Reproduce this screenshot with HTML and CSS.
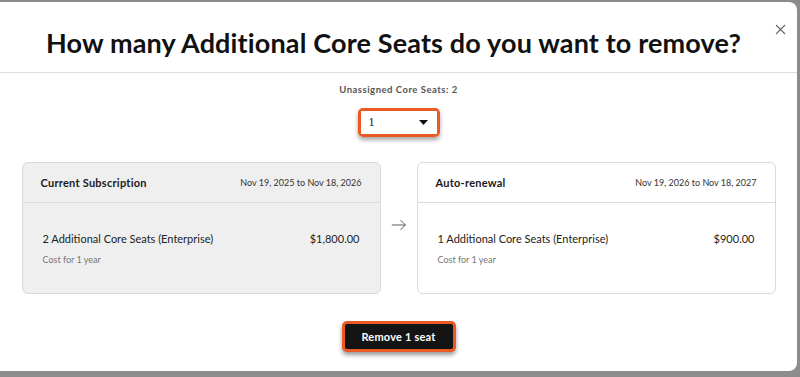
FILE: index.html
```html
<!DOCTYPE html>
<html lang="en">
<head>
  <meta charset="UTF-8">
  <meta name="viewport" content="width=device-width, initial-scale=1.0">
  <title>Remove seats</title>
  <link rel="stylesheet" href="styles.css">
</head>
<body>

  <div class="modal">
    <div class="modal-header">
      <h2>How many Additional Core Seats do you want to remove?</h2>
      <button class="close" aria-label="Close">
        <svg width="11" height="11" viewBox="0 0 11 11"><path d="M1 1L10 10M10 1L1 10" stroke="#666" stroke-width="1.1" fill="none"/></svg>
      </button>
    </div>

    <div class="modal-body">
      <div class="unassigned">Unassigned Core Seats: 2</div>

      <div class="select-wrap">
        <div class="select">
          <span>1</span>
          <svg width="9" height="5" viewBox="0 0 9 5"><path d="M0 0H9L4.5 5Z" fill="#111"/></svg>
        </div>
      </div>

      <div class="compare">
        <div class="card current">
          <div class="card-head">
            <span class="card-title">Current Subscription</span>
            <span class="card-dates">Nov 19, 2025 to Nov 18, 2026</span>
          </div>
          <div class="card-body">
            <div class="line">
              <span>2 Additional Core Seats (Enterprise)</span>
              <span>$1,800.00</span>
            </div>
            <div class="note">Cost for 1 year</div>
          </div>
        </div>

        <div class="arrow">
          <svg width="20" height="14" viewBox="0 0 20 14"><path d="M1 7H18M12 1L18 7L12 13" stroke="#555" stroke-width="1.2" fill="none"/></svg>
        </div>

        <div class="card">
          <div class="card-head">
            <span class="card-title">Auto-renewal</span>
            <span class="card-dates">Nov 19, 2026 to Nov 18, 2027</span>
          </div>
          <div class="card-body">
            <div class="line">
              <span>1 Additional Core Seats (Enterprise)</span>
              <span>$900.00</span>
            </div>
            <div class="note">Cost for 1 year</div>
          </div>
        </div>
      </div>

      <div class="actions">
        <button class="remove">Remove 1 seat</button>
      </div>
    </div>
  </div>

</body>
</html>
```

FILE: styles.css
```css
body {
  font-family: Lato, "Liberation Sans", sans-serif;
  background-color: #8c8c8c;
  margin: 0;
  padding: 2px 3px 0 0;
  height: 377px;
  box-sizing: border-box;
  overflow: hidden;
}

.modal {
  background-color: white;
  border-radius: 0 8px 8px 0;
  height: 369px;
}

.modal-header {
  position: relative;
  height: 70px;
  border-bottom: 1px solid #dcdcdc;
  display: flex;
  justify-content: center;
  align-items: flex-end;
}

h2 {
  margin: 0 10px 13px 0;
  font-size: 27px;
  font-weight: 700;
  color: #111;
  letter-spacing: 0.15px;
}

.close {
  position: absolute;
  top: 21px;
  right: 11px;
  background: none;
  border: none;
  padding: 0;
  cursor: pointer;
}

.modal-body {
  display: flex;
  flex-direction: column;
  align-items: center;
}

.unassigned {
  margin-top: 11px;
  font-size: 9.5px;
  font-weight: 700;
  color: #555;
  letter-spacing: 0.5px;
}

.select-wrap {
  margin-top: 13px;
  border: 3px solid #ec5a24;
  border-radius: 5px;
  box-shadow: 0 3px 4px rgba(0, 0, 0, 0.35);
}

.select {
  width: 76px;
  height: 23px;
  padding: 0 9px 0 8px;
  box-sizing: border-box;
  display: flex;
  justify-content: space-between;
  align-items: center;
  background: white;
  font-family: "Liberation Serif", serif;
  font-size: 12px;
  color: #111;
}

.compare {
  margin-top: 25px;
  display: flex;
  align-items: flex-start;
  gap: 10px;
}

.card {
  width: 357px;
  height: 130px;
  border: 1px solid #dadada;
  border-radius: 6px;
  background: white;
}

.card.current {
  background-color: #efefef;
}

.card-head {
  height: 39px;
  padding: 0 18px;
  border-bottom: 1px solid #dcdcdc;
  display: flex;
  justify-content: space-between;
  align-items: center;
}

.card-title {
  font-size: 11px;
  font-weight: 700;
  color: #1a1a1a;
  letter-spacing: 0.25px;
}

.card-dates {
  font-size: 9px;
  color: #333;
}

.card-body {
  padding: 29px 20px 0 20px;
}

.line {
  display: flex;
  justify-content: space-between;
  font-size: 11px;
  color: #222;
}

.note {
  margin-top: 9px;
  font-size: 9px;
  color: #777;
}

.arrow {
  margin-top: 56px;
  width: 16px;
  display: flex;
  justify-content: center;
}

.actions {
  margin-top: 27px;
}

.remove {
  background-color: #141414;
  border: 3px solid #ec5a24;
  border-radius: 5px;
  color: white;
  font-family: Lato, "Liberation Sans", sans-serif;
  font-size: 11px;
  font-weight: 700;
  letter-spacing: 0.2px;
  width: 114px;
  height: 31px;
  cursor: pointer;
  box-shadow: 0 3px 4px rgba(0, 0, 0, 0.4);
}
```
